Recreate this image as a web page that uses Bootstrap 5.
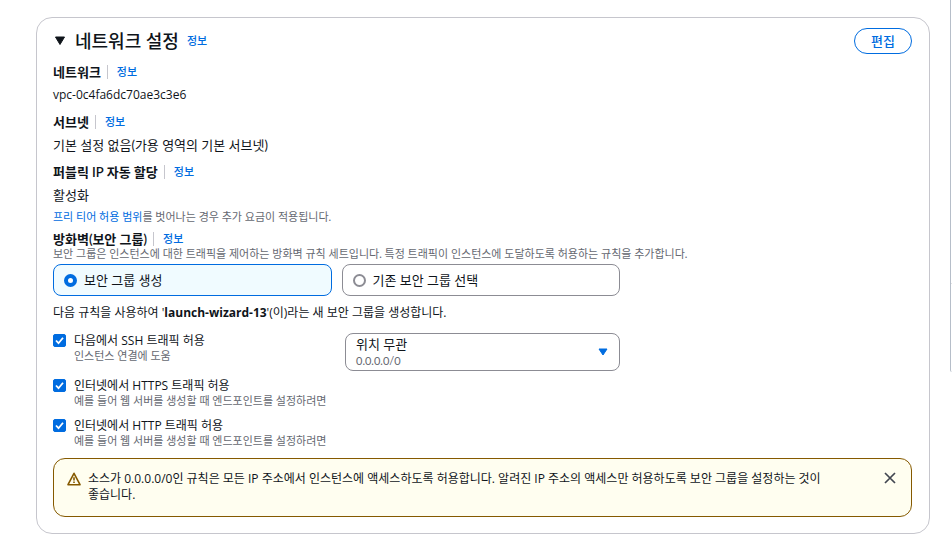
<!DOCTYPE html>
<html lang="ko">
<head>
<meta charset="utf-8">
<meta name="viewport" content="width=device-width, initial-scale=1">
<title>네트워크 설정</title>
<link href="https://cdn.jsdelivr.net/npm/bootstrap@5.3.0/dist/css/bootstrap.min.css" rel="stylesheet">
<style>
  :root { --blue: #006ce0; --ink: #0f141a; --muted-ink: #656871; --line: #8c8c94; }
  body { font-family: Lato, "Noto Sans CJK KR", sans-serif; font-size: 13px; line-height: 16px; color: var(--ink); background: #fff; overflow-x: hidden; word-break: keep-all; }
  a { color: var(--blue); text-decoration: none; }
  .page-main { padding: 17px 20px 7px 36px; min-width: 0; }
  .side-panel { width: 2px; height: 372px; border-left: 1px solid #b6bec9; border-bottom-left-radius: 16px; }
  .side-panel hr { margin: 283px 0 0; color: #8c8c94; }
  .panel { border: 1px solid #c6c6cd; border-radius: 16px; padding: 10px 17px 16px 16px; }
  .panel-title { font-size: 18px; line-height: 24px; font-weight: 500; }
  .caret { width: 12px; height: 10px; margin: 0 1px; }
  .btn-edit { border: 1px solid var(--blue); border-radius: 20px; color: var(--blue); font-size: 13px; line-height: 16px; font-weight: 500; padding: 4px 16px; }
  .info { font-size: 11px; font-weight: 500; }
  .field-block { margin-top: 11px; }
  header + .field-block { margin-top: 10px; }
  .field-name { font-size: 13px; font-weight: 600; }
  .field-name + .info { border-left: 1px solid #c6c6cd; padding-left: 9px; margin-left: 6px; line-height: 14px; }
  .field-value { margin-top: 7px; }
  .mixed-text { font-family: "Open Sans", "Noto Sans CJK KR", sans-serif; font-size: 12px; }
  .hint { font-family: Lato, "Noto Sans CJK KR", sans-serif; font-size: 11px; line-height: 14px; color: var(--muted-ink); }
  .choices { max-width: 567px; gap: 10px; margin-top: 3px; }
  .choice { flex: 1 1 0; border: 1px solid var(--line); border-radius: 8px; padding: 7px 10px; gap: 7px; }
  .choice:has(input:checked) { border-color: var(--blue); background: #f0fbff; }
  .form-check-input { margin: 0; flex: none; width: 13px; height: 13px; border: 2px solid var(--line); }
  .form-check-input:checked { background-color: var(--blue); border-color: var(--blue); }
  .form-check-input[type=checkbox] { border-radius: 2px; border-width: 1px; margin-top: 1px; }
  .form-check-input[type=checkbox]:checked { background-size: 13px 13px; background-image: url("data:image/svg+xml,%3Csvg xmlns='http://www.w3.org/2000/svg' viewBox='0 0 13 13'%3E%3Cpath d='M3 6.500 5.500 9.200 10 3.700' fill='none' stroke='white' stroke-width='1.800'/%3E%3C/svg%3E"); }
  .form-check-input[type=radio]:checked { background: #fff; border-width: 4px; background-image: none; }
  .sg-summary { margin: 9px 0 12px; }
  .rules { max-width: 567px; }
  .rule { gap: 8px; }
  .rule-gap { margin-top: 10px; }
  .source { width: 275px; }
  .source .form-select { height: 38px; border: 1px solid var(--line); border-radius: 8px; font-size: 13px; line-height: 16px; color: var(--ink); padding: 2px 28px 18px 10px;
    background-image: url("data:image/svg+xml,%3Csvg xmlns='http://www.w3.org/2000/svg' viewBox='0 0 10 8'%3E%3Cpath d='M1 1h8L5 7z' fill='%23006ce0' stroke='%23006ce0' stroke-linejoin='round'/%3E%3C/svg%3E"); background-size: 10px 8px; background-position: right 11px center; }
  .source-note { position: absolute; left: 11px; bottom: 3px; pointer-events: none; }
  .warn { border: 1px solid #855900; border-radius: 12px; background: #fffef0; padding: 12px 14px 13px 13px; gap: 7px; color: var(--ink); }
  .warn p { padding-right: 26px; }
  .warn-icon { margin-top: 1px; }
  .btn-dismiss { width: 14px; height: 14px; padding: 0; border: 0; line-height: 0; }
</style>
<script src="https://cdn.jsdelivr.net/npm/bootstrap@5.3.0/dist/js/bootstrap.bundle.min.js" defer></script>
</head>
<body>
<div class="d-flex align-items-start">
  <main class="page-main flex-grow-1">
    <section class="panel">
      <header class="d-flex align-items-center">
        <svg class="caret" viewBox="0 0 12 10" aria-hidden="true"><path d="M1.500 1h9L6 8.500z" fill="#0f141a" stroke="#0f141a" stroke-linejoin="round"/></svg>
        <h2 class="panel-title mb-0 ms-2">네트워크 설정</h2>
        <a class="info ms-2" href="#">정보</a>
        <button type="button" class="btn btn-edit ms-auto">편집</button>
      </header>

      <div class="field-block">
        <div class="d-flex align-items-center"><span class="field-name">네트워크</span><a class="info" href="#">정보</a></div>
        <div class="field-value mixed-text">vpc-0c4fa6dc70ae3c3e6</div>
      </div>
      <div class="field-block">
        <div class="d-flex align-items-center"><span class="field-name">서브넷</span><a class="info" href="#">정보</a></div>
        <div class="field-value">기본 설정 없음(가용 영역의 기본 서브넷)</div>
      </div>
      <div class="field-block">
        <div class="d-flex align-items-center"><span class="field-name">퍼블릭 IP 자동 할당</span><a class="info" href="#">정보</a></div>
        <div class="field-value">활성화</div>
        <div class="field-value hint"><a href="#">프리 티어 허용 범위</a>를 벗어나는 경우 추가 요금이 적용됩니다.</div>
      </div>
      <div class="field-value">
        <div class="d-flex align-items-center"><span class="field-name">방화벽(보안 그룹)</span><a class="info" href="#">정보</a></div>
        <div class="hint">보안 그룹은 인스턴스에 대한 트래픽을 제어하는 방화벽 규칙 세트입니다. 특정 트래픽이 인스턴스에 도달하도록 허용하는 규칙을 추가합니다.</div>
      </div>

      <div class="choices d-flex">
        <label class="choice d-flex align-items-center"><input class="form-check-input" type="radio" name="sg" checked>보안 그룹 생성</label>
        <label class="choice d-flex align-items-center"><input class="form-check-input" type="radio" name="sg">기존 보안 그룹 선택</label>
      </div>
      <p class="sg-summary mixed-text">다음 규칙을 사용하여 '<strong>launch-wizard-13</strong>'(이)라는 새 보안 그룹을 생성합니다.</p>

      <div class="rules">
        <div class="d-flex justify-content-between align-items-start">
          <div class="rule d-flex">
            <input class="form-check-input" type="checkbox" id="ssh" checked>
            <label class="mixed-text" for="ssh">다음에서 SSH 트래픽 허용<span class="hint d-block">인스턴스 연결에 도움</span></label>
          </div>
          <div class="source position-relative">
            <select class="form-select" aria-label="소스 유형"><option>위치 무관</option></select>
            <span class="source-note hint">0.0.0.0/0</span>
          </div>
        </div>
        <div class="rule d-flex field-value">
          <input class="form-check-input" type="checkbox" id="https" checked>
          <label class="mixed-text" for="https">인터넷에서 HTTPS 트래픽 허용<span class="hint d-block">예를 들어 웹 서버를 생성할 때 엔드포인트를 설정하려면</span></label>
        </div>
        <div class="rule d-flex rule-gap">
          <input class="form-check-input" type="checkbox" id="http" checked>
          <label class="mixed-text" for="http">인터넷에서 HTTP 트래픽 허용<span class="hint d-block">예를 들어 웹 서버를 생성할 때 엔드포인트를 설정하려면</span></label>
        </div>
      </div>

      <div class="warn d-flex align-items-start rule-gap" role="alert">
        <svg class="warn-icon flex-shrink-0" width="14" height="14" viewBox="0 0 14 14" fill="none" stroke="#855900" stroke-width="1.600" stroke-linejoin="round" aria-hidden="true"><path d="M7 1.300 13 12.700H1z"/><path d="M7 5.200v3.300M7 9.500v1.500"/></svg>
        <p class="mixed-text mb-0 flex-grow-1">소스가 0.0.0.0/0인 규칙은 모든 IP 주소에서 인스턴스에 액세스하도록 허용합니다. 알려진 IP 주소의 액세스만 허용하도록 보안 그룹을 설정하는 것이 좋습니다.</p>
        <button type="button" class="btn btn-dismiss flex-shrink-0" aria-label="닫기"><svg width="14" height="14" viewBox="0 0 14 14" stroke="#424650" stroke-width="1.700"><path d="M2 2l10 10M12 2 2 12"/></svg></button>
      </div>
    </section>
  </main>
  <aside class="side-panel flex-shrink-0"><hr></aside>
</div>
</body>
</html>
